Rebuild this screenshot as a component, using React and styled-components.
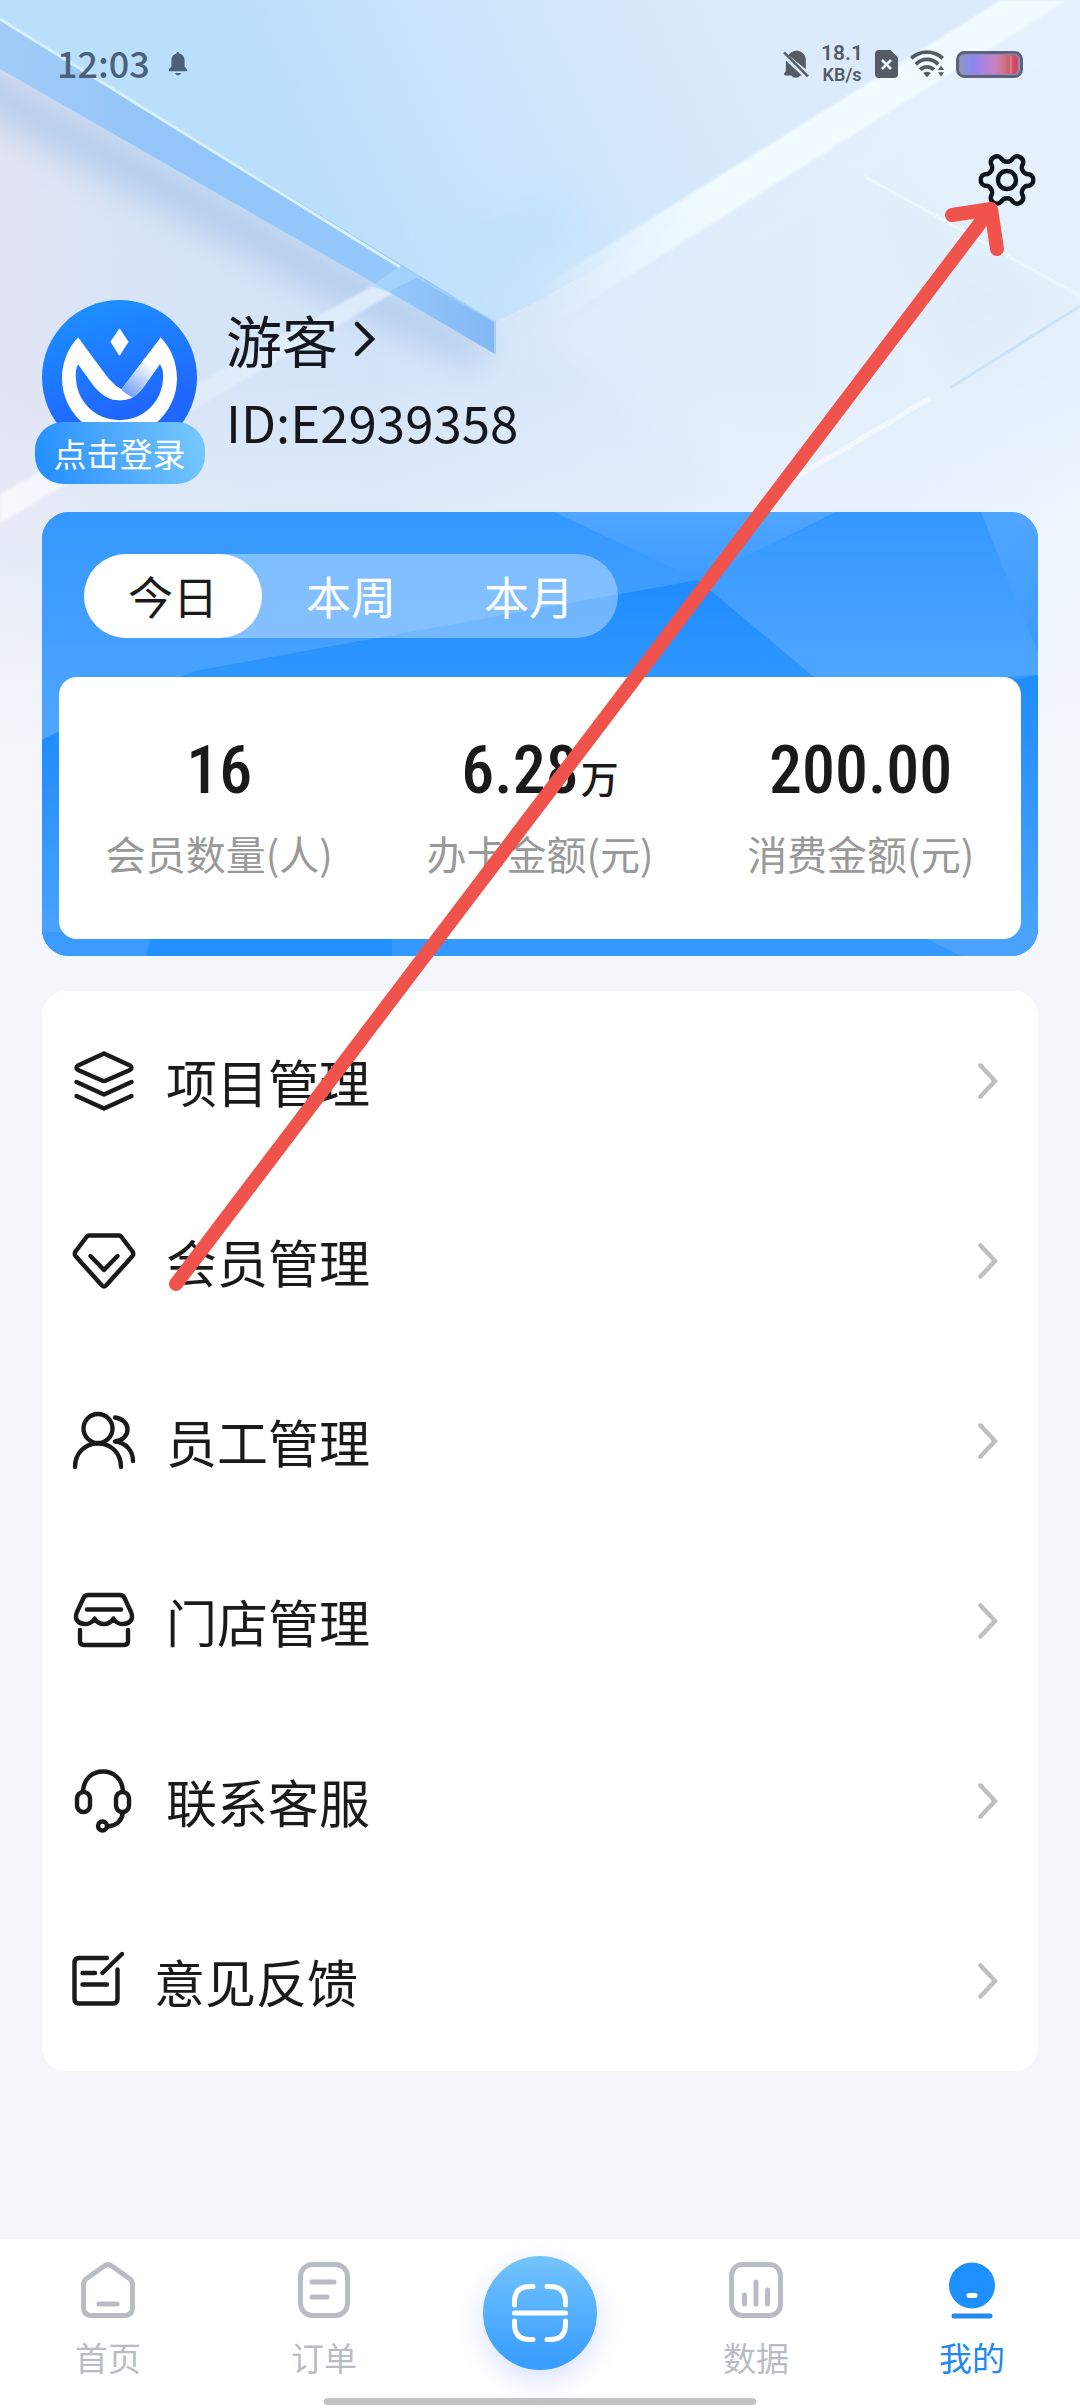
import { useState } from "react";
import styled, { createGlobalStyle } from "styled-components";

const GlobalStyle = createGlobalStyle`
  * {
    box-sizing: border-box;
    margin: 0;
    padding: 0;
  }

  body {
    background: #f4f6fb;
    color: #1a1a1a;
    font-family: "Noto Sans CJK SC", "Noto Sans", sans-serif;
  }

  button {
    border: none;
    background: none;
    color: inherit;
    font: inherit;
    cursor: pointer;
  }

  a {
    color: inherit;
    text-decoration: none;
  }

  svg {
    display: block;
    flex-shrink: 0;
  }
`;

const Page = styled.div`
  position: relative;
  display: flex;
  flex-direction: column;
  min-height: 100vh;
  isolation: isolate;
  overflow: hidden;
`;

const Backdrop = styled.svg`
  position: absolute;
  top: 0;
  left: 0;
  z-index: -1;
  width: 100%;
  height: 760px;
`;

const Annotation = styled.svg`
  position: absolute;
  top: 0;
  left: 0;
  z-index: 5;
  width: 100%;
  pointer-events: none;
`;

/**************************/
/* STATUS BAR */
/**************************/

const StatusBar = styled.header`
  display: flex;
  align-items: center;
  justify-content: space-between;
  height: 128px;
  padding: 0 57px;
  color: #565c66;
`;

const StatusGroup = styled.div`
  display: flex;
  align-items: center;
  gap: ${(props) => props.$gap}px;
`;

const Clock = styled.time`
  padding-bottom: 4px;
  font-size: 36px;
  font-weight: 500;
  line-height: 40px;
  color: #4c6079;
`;

const Speed = styled.div`
  display: flex;
  flex-direction: column;
  align-items: center;
  font-family: Roboto, sans-serif;
  font-size: 21px;
  font-weight: 600;
  line-height: 22px;

  small {
    font-size: 18px;
  }
`;

/**************************/
/* PROFILE */
/**************************/

const Toolbar = styled.div`
  display: flex;
  justify-content: flex-end;
  padding: 24px 43px 0;
`;

const IconButton = styled.button`
  width: 60px;
  height: 56px;
`;

const Profile = styled.section`
  display: flex;
  gap: 29px;
  margin: 92px 42px 28px;
`;

const Avatar = styled.div`
  position: relative;
  width: 155px;
  height: 184px;
`;

const LoginBadge = styled.button`
  position: absolute;
  bottom: 0;
  left: 50%;
  width: 170px;
  height: 62px;
  margin-left: -85px;
  border-radius: 28px;
  background: linear-gradient(75deg, #2490ff 5%, #50aafc 50%, #78cbfd 100%);
  color: #fff;
  font-size: 33px;
  line-height: 62px;
`;

const ProfileText = styled.div`
  display: flex;
  flex-direction: column;
  align-items: flex-start;
  color: #14181e;
`;

const UserName = styled.button`
  display: flex;
  align-items: center;
  gap: 16px;
  font-size: 56px;
  line-height: 78px;
`;

const UserId = styled.p`
  font-size: 51px;
  line-height: 86px;
`;

/**************************/
/* SUMMARY */
/**************************/

const Summary = styled.section`
  position: relative;
  margin: 0 42px;
  padding: 42px 17px 17px;
  border-radius: 27px;
  background: #3398ff;
  overflow: hidden;
  isolation: isolate;
`;

const Facets = styled.svg`
  position: absolute;
  inset: 0;
  z-index: -1;
  width: 100%;
  height: 100%;
`;

const Tabs = styled.div`
  display: inline-flex;
  margin: 0 25px 39px;
  border-radius: 42px;
  background: rgba(255, 255, 255, 0.35);
  vertical-align: top;
`;

const Tab = styled.button`
  width: 178px;
  height: 84px;
  border-radius: 42px;
  background: ${(props) => (props.$active ? "#fff" : "transparent")};
  color: ${(props) => (props.$active ? "#1a1a1a" : "#fff")};
  font-size: 45px;
  line-height: 84px;
`;

const Stats = styled.dl`
  display: grid;
  grid-template-columns: repeat(3, 1fr);
  padding: 58px 0;
  border-radius: 18px;
  background: #fff;
`;

const Stat = styled.div`
  display: flex;
  flex-direction: column-reverse;
  gap: 18px;
  text-align: center;

  dt {
    color: #999;
    font-size: 40px;
    line-height: 56px;
    white-space: nowrap;
  }

  dd {
    display: flex;
    align-items: baseline;
    justify-content: center;
    height: 72px;
    font-family: "Roboto Condensed", "Liberation Sans Narrow", Roboto,
      sans-serif;
    font-size: 66px;
    font-weight: 500;
    line-height: 72px;
  }

  small {
    margin-left: 2px;
    font-family: "Noto Sans CJK SC", sans-serif;
    font-size: 38px;
    font-weight: 500;
    line-height: 40px;
  }
`;

/**************************/
/* MENU */
/**************************/

const Menu = styled.ul`
  margin: 35px 42px;
  border-radius: 24px;
  background: #fff;
  list-style: none;
`;

const MenuLink = styled.a`
  display: flex;
  align-items: center;
  height: 180px;
  padding: 0 40px 0 30px;
  font-size: 51px;
  line-height: 72px;

  span {
    flex: 1;
    margin-left: 30px;
  }
`;

/**************************/
/* TAB BAR */
/**************************/

const TabBar = styled.footer`
  display: flex;
  flex-direction: column;
  align-items: center;
  margin-top: auto;
  padding-bottom: 3px;
  background: #fff;
`;

const TabBarItems = styled.nav`
  display: grid;
  grid-template-columns: repeat(5, 1fr);
  justify-items: center;
  align-items: start;
  width: 100%;
  height: 159px;
`;

const TabBarLink = styled.a`
  display: flex;
  flex-direction: column;
  align-items: center;
  gap: 18px;
  padding-top: 22px;
  color: ${(props) => (props.$active ? "#2288ee" : "#b9bdc3")};
  font-size: 33px;
  line-height: 40px;
`;

const ScanButton = styled.button`
  display: flex;
  align-items: center;
  justify-content: center;
  width: 114px;
  height: 114px;
  margin-top: 17px;
  border-radius: 50%;
  background: linear-gradient(#74c4fc, #359bff);
  box-shadow: 0 10px 28px rgba(80, 120, 255, 0.22);
`;

const HomeIndicator = styled.div`
  width: 40%;
  height: 7px;
  border-radius: 4px;
  background: #c2c2c2;
`;

const polar = (radius, degrees) => {
  const angle = (degrees * Math.PI) / 180;
  return `${(radius * Math.cos(angle)).toFixed(2)} ${(
    radius * Math.sin(angle)
  ).toFixed(2)}`;
};

// six round teeth joined by shallow valleys
const gearPath =
  [0, 60, 120, 180, 240, 300]
    .map(
      (a) =>
        `${a === 0 ? "M" : "L"}${polar(22.5, a - 15)} A6 6 0 0 1 ${polar(
          22.5,
          a + 15
        )} C${polar(17.5, a + 18)} ${polar(17.5, a + 42)} ${polar(
          22.5,
          a + 45
        )}`
    )
    .join(" ") + "Z";

const GearIcon = () => (
  <svg width="60" height="56" viewBox="-30 -28 60 56" fill="none">
    <g stroke="#0e141c" strokeWidth="4.4" strokeLinejoin="round">
      <path d={gearPath} />
      <circle r="9" />
    </g>
  </svg>
);

const BellIcon = () => (
  <svg width="20" height="24" viewBox="0 0 20 24" fill="#4c6079">
    <path d="M8.6 1.4a1.4 1.4 0 0 1 2.8 0c3.4.8 5.2 3.5 5.2 6.8v6.2l2.6 3.2q.4 1.6-.8 1.6H1.6q-1.2 0-.8-1.6L3.4 14.4V8.2C3.4 4.9 5.2 2.2 8.6 1.4ZM7 21h6q-.6 2.2-3 2.2T7 21Z" />
  </svg>
);

const BellOffIcon = () => (
  <svg width="26" height="28" viewBox="0 0 26 28">
    <path
      d="M5.5 5.2C7.2 2.6 9.6 1.2 11.4.9q2.3-.9 4.4.1C20 2.2 22.8 5.6 22.8 9.8v9.4ZM2.8 10.4 19 25.4H17.4q-1.6 2.4-4.6 2.4t-4.6-2.4H2.4q-2-.2-1.2-2.2l1.6-2Z"
      fill="currentColor"
    />
    <path d="M1 2.4 25 26.4" stroke="currentColor" strokeWidth="2.4" />
  </svg>
);

const SimIcon = () => (
  <svg width="23" height="28" viewBox="0 0 23 28">
    <path
      d="M4 0h11.5L23 7.6V24a4 4 0 0 1-4 4H4a4 4 0 0 1-4-4V4a4 4 0 0 1 4-4Z"
      fill="currentColor"
    />
    <path d="m7 10 9 9m0-9-9 9" stroke="#e9f4fe" strokeWidth="2.6" />
  </svg>
);

const WifiIcon = () => (
  <svg width="34" height="28" viewBox="0 0 34 28" fill="none">
    <g stroke="currentColor" strokeWidth="3.8">
      <path d="M1.2 8.4Q7.8 2.2 17 2.2t15.8 6.2" />
      <path d="M5.8 14.400Q10.4 9.4 17 9.4t11.200 5" />
      <path d="M10.2 19.8q2.8-3 6.8-3t6.8 3" />
    </g>
    <path d="M13.2 23q3.8-2.6 7.6 0L17 27.2Z" fill="currentColor" />
    <path d="m28 20 3-4.4L34 20Zm0 2.2h6l-3 4.4Z" fill="currentColor" />
  </svg>
);

const BatteryIcon = () => (
  <svg width="67" height="27" viewBox="0 0 67 27">
    <defs>
      <linearGradient id="charge">
        <stop offset="0" stopColor="#9098c4" />
        <stop offset=".22" stopColor="#8886f0" />
        <stop offset=".42" stopColor="#b082dc" />
        <stop offset=".6" stopColor="#c880c4" />
        <stop offset=".76" stopColor="#cf7480" />
        <stop offset=".9" stopColor="#d0506a" />
        <stop offset="1" stopColor="#d8405a" />
      </linearGradient>
    </defs>
    <rect
      x="1.5"
      y="1.5"
      width="64"
      height="24"
      rx="7"
      fill="#8f92ac"
      stroke="#5d6280"
      strokeWidth="3"
    />
    <rect x="4" y="4" width="58" height="19" rx="4" fill="url(#charge)" />
    <path d="M55 5v17" stroke="#d99aa6" />
  </svg>
);

const Logo = () => (
  <svg width="155" height="155" viewBox="37 33 464 464">
    <defs>
      <linearGradient id="logoBg" x1="0" y1="0" x2=".3" y2="1">
        <stop offset="0" stopColor="#1c95ff" />
        <stop offset=".8" stopColor="#1f68ff" />
      </linearGradient>
      <linearGradient
        id="logoFold"
        gradientUnits="userSpaceOnUse"
        x1="280"
        y1="310"
        x2="350"
        y2="215"
      >
        <stop offset="0" stopColor="#6f9dff" />
        <stop offset="1" stopColor="#fff" />
      </linearGradient>
    </defs>
    <circle cx="269" cy="265" r="232" fill="url(#logoBg)" />
    <path
      d="M269 122Q281 142 293 158 281 176 269 195 257 176 245 158 257 142 269 122Z"
      fill="#fff"
      stroke="#fff"
      strokeWidth="6"
      strokeLinejoin="round"
    />
    <path
      d="M145 145C165 170 225 255 245 277Q258 292 275 300L392 145C425 178 441 222 441 268A172 172 0 0 1 97 268C97 222 113 178 145 145ZM145 225C138 236 138 250 138 262A131 131 0 0 0 400 262C400 250 398 236 390 225L345 288C325 318 302 333 269 333 235 333 212 314 190 288Z"
      fill="#fff"
      fillRule="evenodd"
    />
    <path
      d="M275 300 345 207 385 228 345 288Q328 313 306 326 288 320 275 300Z"
      fill="url(#logoFold)"
    />
    <path d="M240 272Q258 296 308 325 290 333 269 333 235 333 205 303Z" fill="#fff" />
  </svg>
);

const Chevron = () => (
  <svg width="20" height="36" viewBox="0 0 20 36" fill="none">
    <path
      d="M2.5 2.5 17 18 2.5 33.5"
      stroke="#bfbfbf"
      strokeWidth="4.5"
      strokeLinecap="round"
    />
  </svg>
);

const LineIcon = ({ width = 64, children }) => (
  <svg
    width={width}
    height="64"
    viewBox={`0 0 ${width} 64`}
    fill="none"
    stroke="#1a1a1a"
    strokeWidth="4.4"
    strokeLinecap="round"
    strokeLinejoin="round"
  >
    {children}
  </svg>
);

const LayersIcon = () => (
  <LineIcon>
    <path d="M32 4.5 58 16.5Q61 19 58 21L34 31.5Q32 32.5 30 31.5L6 21Q3 19 6 16.5Z" />
    <path d="M4.5 33 32 45.5 59.5 33" />
    <path d="M4.5 47 32 59.5 59.5 47" />
  </LineIcon>
);

const DiamondIcon = () => (
  <LineIcon>
    <path d="M17 6.5H47Q48.5 6.5 49.5 8L60.5 22.5Q62 25 60.5 27L34 56.5Q32 58.5 30 56.5L3.5 27Q2 25 3.5 22.5L14.5 8Q15.5 6.5 17 6.5Z" />
    <path d="M18.5 27 32 41 45.5 27" />
  </LineIcon>
);

const UsersIcon = () => (
  <LineIcon>
    <circle cx="26" cy="19.5" r="14.5" />
    <path d="M3 58C3 44 13 34.5 26 34.5S49 44 49 58" />
    <path d="M43 8.5C50 9.5 55.5 14 55.5 20.5S50 31.5 43 32.5C54 33.5 61 42 61 52" />
  </LineIcon>
);

const StoreIcon = () => (
  <LineIcon>
    <path d="M16 6H48Q51 6 52.5 9L59 23C62 30 58 35 51 35 46 35 43 33 41.5 29.5 39 33.5 36 35 32 35S25 33.5 22.5 29.5C21 33 18 35 13 35 6 35 2 30 5 23L11.5 9Q13 6 16 6Z" />
    <path d="M15 20.5H49" />
    <path d="M8 41V52Q8 56 12 56H52Q56 56 56 52V41" />
  </LineIcon>
);

const HeadsetIcon = () => (
  <LineIcon>
    <path d="M11 22C12 10 20 2.5 31 2.5S50 10 51 22" />
    <rect x="5" y="23" width="13" height="20" rx="6.5" />
    <rect x="44" y="23" width="13" height="20" rx="6.5" />
    <path d="M51 43C50 51 45 56.5 36 57.5" />
    <circle cx="30.5" cy="57" r="4.5" />
  </LineIcon>
);

const FeedbackIcon = () => (
  <LineIcon width={52}>
    <path d="M35 9H7Q2.5 9 2.5 13.5V50Q2.5 54.5 7 54.5H41Q45.5 54.5 45.5 50V20.5" />
    <path d="M30.5 24 50 5M10.5 24H23M10.5 35.5H35" />
  </LineIcon>
);

const TabIcon = ({ children }) => (
  <svg
    width="56"
    height="58"
    viewBox="0 0 56 58"
    fill="none"
    stroke="currentColor"
    strokeWidth="5"
    strokeLinecap="round"
    strokeLinejoin="round"
  >
    {children}
  </svg>
);

const HomeIcon = () => (
  <TabIcon>
    <path d="M24.5 4.8Q28 2.5 31.5 4.8L50 18Q52.5 20 52.5 24V46Q52.5 54.5 44 54.5H12Q3.5 54.5 3.5 46V24Q3.5 20 6 18Z" />
    <path d="M19 43H37" />
  </TabIcon>
);

const OrderIcon = () => (
  <TabIcon>
    <rect x="4.5" y="3.5" width="47" height="51" rx="12" />
    <path d="M16 21H38M16 36H31" />
  </TabIcon>
);

const DataIcon = () => (
  <TabIcon>
    <rect x="3.5" y="3.5" width="49" height="51" rx="11" />
    <path d="M16.5 34V43M28 21V43M39.5 29V43" />
  </TabIcon>
);

const MineIcon = () => (
  <TabIcon>
    <circle cx="28" cy="24.5" r="23" fill="#1e8fff" stroke="none" />
    <path d="M25 34.5H31" stroke="#fff" />
    <path d="M10 55H46" />
  </TabIcon>
);

const ScanIcon = () => (
  <svg
    width="58"
    height="60"
    viewBox="0 0 58 60"
    fill="none"
    stroke="#fff"
    strokeWidth="5"
    strokeLinecap="round"
  >
    <path d="M22 3.5H19Q3.5 3.5 3.5 19V22M36 3.5H39Q54.5 3.5 54.5 19V22M22 56.5H19Q3.5 56.5 3.5 41V38M36 56.5H39Q54.5 56.5 54.5 41V38M3.5 30H54.5" />
  </svg>
);

const HeaderBackdrop = () => (
  <Backdrop viewBox="0 0 1080 760" preserveAspectRatio="none" aria-hidden="true">
    <defs>
      <linearGradient id="sky" x1="0" y1="0" x2="1" y2="0">
        <stop offset="0" stopColor="#e1e4f3" />
        <stop offset=".14" stopColor="#d6e4f6" />
        <stop offset=".35" stopColor="#d4e4f8" />
        <stop offset=".7" stopColor="#dfecfc" />
        <stop offset="1" stopColor="#e8f3fd" />
      </linearGradient>
      <linearGradient id="skyFade" x1="0" y1="0" x2="0" y2="1">
        <stop offset=".5" stopColor="#f4f6fb" stopOpacity="0" />
        <stop offset="1" stopColor="#f4f6fb" />
      </linearGradient>
      <linearGradient
        id="plateTop"
        gradientUnits="userSpaceOnUse"
        x1="330"
        y1="250"
        x2="760"
        y2="60"
      >
        <stop offset="0" stopColor="#b9dffc" />
        <stop offset=".4" stopColor="#cbe4fb" />
        <stop offset="1" stopColor="#dbebfb" />
      </linearGradient>
      <linearGradient id="plateSide">
        <stop offset="0" stopColor="#a2cbf8" />
        <stop offset=".3" stopColor="#93c5f8" />
        <stop offset=".8" stopColor="#94c8fa" />
        <stop offset="1" stopColor="#82b7f4" />
      </linearGradient>
      <linearGradient
        id="beam"
        gradientUnits="userSpaceOnUse"
        x1="540"
        y1="310"
        x2="720"
        y2="200"
      >
        <stop offset="0" stopColor="#e8f6ff" stopOpacity="0" />
        <stop offset=".5" stopColor="#ecf8ff" stopOpacity=".7" />
        <stop offset="1" stopColor="#f2fbff" />
      </linearGradient>
      <linearGradient
        id="lowBeam"
        gradientUnits="userSpaceOnUse"
        x1="0"
        y1="510"
        x2="400"
        y2="280"
      >
        <stop offset="0" stopColor="#fafcff" stopOpacity=".95" />
        <stop offset=".5" stopColor="#eef6ff" stopOpacity=".4" />
        <stop offset="1" stopColor="#e6f4ff" stopOpacity=".8" />
      </linearGradient>
      <filter id="soft" x="-20%" y="-20%" width="140%" height="140%">
        <feGaussianBlur stdDeviation="16" />
      </filter>
      <filter id="edge" x="-5%" y="-5%" width="110%" height="110%">
        <feGaussianBlur stdDeviation="1.5" />
      </filter>
    </defs>
    <rect width="1080" height="760" fill="url(#sky)" />
    <path
      d="M-40 50 495 346 470 366 370 320-40 100Z"
      fill="#a4c3e8"
      opacity=".7"
      filter="url(#soft)"
    />
    <path d="M0 494 372 286 395 292 0 523Z" fill="url(#lowBeam)" filter="url(#edge)" />
    <path d="M0 0H1067L540 300 495 322 0 19Z" fill="url(#plateTop)" />
    <path
      d="M470 300 590 235 560 190 430 230Z"
      fill="#b9e2fc"
      opacity=".5"
      filter="url(#soft)"
    />
    <path
      d="M540 332 1067 0H1120V400L760 500Z"
      fill="#e4f0fc"
      opacity=".6"
      filter="url(#soft)"
    />
    <path d="M0 19 495 322V354L379 286 0 69Z" fill="url(#plateSide)" />
    <path d="M372 286 400 266 420 276 388 292Z" fill="#a9d8fb" opacity=".7" />
    <path d="M0 19 400 267" stroke="#d8f1ff" strokeWidth="3" />
    <path d="M400 267 495 322V354" stroke="#9fd0fb" strokeWidth="2" fill="none" />
    <path d="M540 288 1001 0H1067L540 332Z" fill="url(#beam)" filter="url(#edge)" />
    <path
      d="M864 176 1080 296V306L950 388Z"
      fill="#d9ecfa"
      opacity=".3"
      filter="url(#soft)"
    />
    <path d="M864 176 1080 296" stroke="#effcff" strokeWidth="3" opacity=".7" />
    <path d="M950 388 1080 306" stroke="#c2dcf3" strokeWidth="3" opacity=".7" />
    <path d="M788 482 930 398" stroke="#f6fbff" strokeWidth="5" opacity=".8" />
    <path d="M0 525 42 552V620L0 650Z" fill="#d5e6f8" opacity=".4" />
    <rect width="1080" height="760" fill="url(#skyFade)" />
  </Backdrop>
);

const SummaryFacets = () => (
  <Facets viewBox="0 0 996 444" preserveAspectRatio="none" aria-hidden="true">
    <defs>
      <linearGradient id="facetDown" x1="0" y1="0" x2="0" y2="1">
        <stop offset="0" stopColor="#3498ff" />
        <stop offset="1" stopColor="#50a6ff" />
      </linearGradient>
      <linearGradient id="facetDark" x1="0" y1="0" x2="0" y2="1">
        <stop offset="0" stopColor="#1f8cff" />
        <stop offset="1" stopColor="#2f97ff" />
      </linearGradient>
      <linearGradient id="facetUp" x1="0" y1="0" x2="0" y2="1">
        <stop offset="0" stopColor="#50a6ff" />
        <stop offset="1" stopColor="#3d9bff" />
      </linearGradient>
      <linearGradient id="facetSide" x1="0" y1="0" x2="0" y2="1">
        <stop offset="0" stopColor="#1f8cff" />
        <stop offset="1" stopColor="#4ea5ff" />
      </linearGradient>
    </defs>
    <path d="M0 0H512L656 68 153 159 100 180 0 228Z" fill="url(#facetDown)" />
    <path d="M512 0H794L691 51 656 68Z" fill="url(#facetUp)" />
    <path d="M656 68 153 159 136 166H784Z" fill="url(#facetDark)" />
    <path d="M656 68 794 0H940L996 130V163L784 175Z" fill="url(#facetDown)" />
    <path d="M939 0H996V140L978 98Z" fill="url(#facetUp)" />
    <path d="M970 168 996 163V444H960Z" fill="url(#facetSide)" />
    <path d="M0 228 20 218V444H0Z" fill="url(#facetSide)" />
    <path d="M0 420H110L104 444H0Z" fill="#3b9bff" />
    <path d="M110 420H350V444H104Z" fill="#2390ff" />
    <path d="M870 420H996V444H920Z" fill="#4ba3ff" />
  </Facets>
);

const periods = ["今日", "本周", "本月"];

const stats = [
  { label: "会员数量(人)", value: "16" },
  { label: "办卡金额(元)", value: "6.28", unit: "万" },
  { label: "消费金额(元)", value: "200.00" },
];

const menuItems = [
  { label: "项目管理", href: "#projects", icon: <LayersIcon /> },
  { label: "会员管理", href: "#members", icon: <DiamondIcon /> },
  { label: "员工管理", href: "#staff", icon: <UsersIcon /> },
  { label: "门店管理", href: "#stores", icon: <StoreIcon /> },
  { label: "联系客服", href: "#support", icon: <HeadsetIcon /> },
  { label: "意见反馈", href: "#feedback", icon: <FeedbackIcon /> },
];

export default function App() {
  const [period, setPeriod] = useState("今日");

  return (
    <Page>
      <GlobalStyle />
      <HeaderBackdrop />

      <StatusBar>
        <StatusGroup $gap={18}>
          <Clock>12:03</Clock>
          <BellIcon />
        </StatusGroup>
        <StatusGroup $gap={12}>
          <BellOffIcon />
          <Speed>
            <span>18.1</span>
            <small>KB/s</small>
          </Speed>
          <SimIcon />
          <WifiIcon />
          <BatteryIcon />
        </StatusGroup>
      </StatusBar>

      <Toolbar>
        <IconButton aria-label="设置">
          <GearIcon />
        </IconButton>
      </Toolbar>

      <Profile>
        <Avatar>
          <Logo />
          <LoginBadge>点击登录</LoginBadge>
        </Avatar>
        <ProfileText>
          <UserName>
            游客
            <svg width="22" height="36" viewBox="0 0 22 36" fill="none">
              <path
                d="M3 3 18 18 3 33"
                stroke="#14181e"
                strokeWidth="4.5"
                strokeLinecap="round"
              />
            </svg>
          </UserName>
          <UserId>ID:E2939358</UserId>
        </ProfileText>
      </Profile>

      <Summary>
        <SummaryFacets />
        <Tabs>
          {periods.map((name) => (
            <Tab
              key={name}
              $active={name === period}
              aria-pressed={name === period}
              onClick={() => setPeriod(name)}
            >
              {name}
            </Tab>
          ))}
        </Tabs>
        <Stats>
          {stats.map((stat) => (
            <Stat key={stat.label}>
              <dt>{stat.label}</dt>
              <dd>
                {stat.value}
                {stat.unit && <small>{stat.unit}</small>}
              </dd>
            </Stat>
          ))}
        </Stats>
      </Summary>

      <Menu>
        {menuItems.map((item) => (
          <li key={item.label}>
            <MenuLink href={item.href}>
              {item.icon}
              <span>{item.label}</span>
              <Chevron />
            </MenuLink>
          </li>
        ))}
      </Menu>

      <TabBar>
        <TabBarItems>
          <TabBarLink href="#home">
            <HomeIcon />
            首页
          </TabBarLink>
          <TabBarLink href="#orders">
            <OrderIcon />
            订单
          </TabBarLink>
          <ScanButton aria-label="扫一扫">
            <ScanIcon />
          </ScanButton>
          <TabBarLink href="#data">
            <DataIcon />
            数据
          </TabBarLink>
          <TabBarLink href="#mine" $active>
            <MineIcon />
            我的
          </TabBarLink>
        </TabBarItems>
        <HomeIndicator />
      </TabBar>

      <Annotation viewBox="0 0 1080 2408" aria-hidden="true">
        <g
          fill="none"
          stroke="#f0524c"
          strokeWidth="14"
          strokeLinecap="round"
          strokeLinejoin="round"
        >
          <path d="M176 1284 990 210" />
          <path d="M952 215 991 209 997 249" />
        </g>
      </Annotation>
    </Page>
  );
}
